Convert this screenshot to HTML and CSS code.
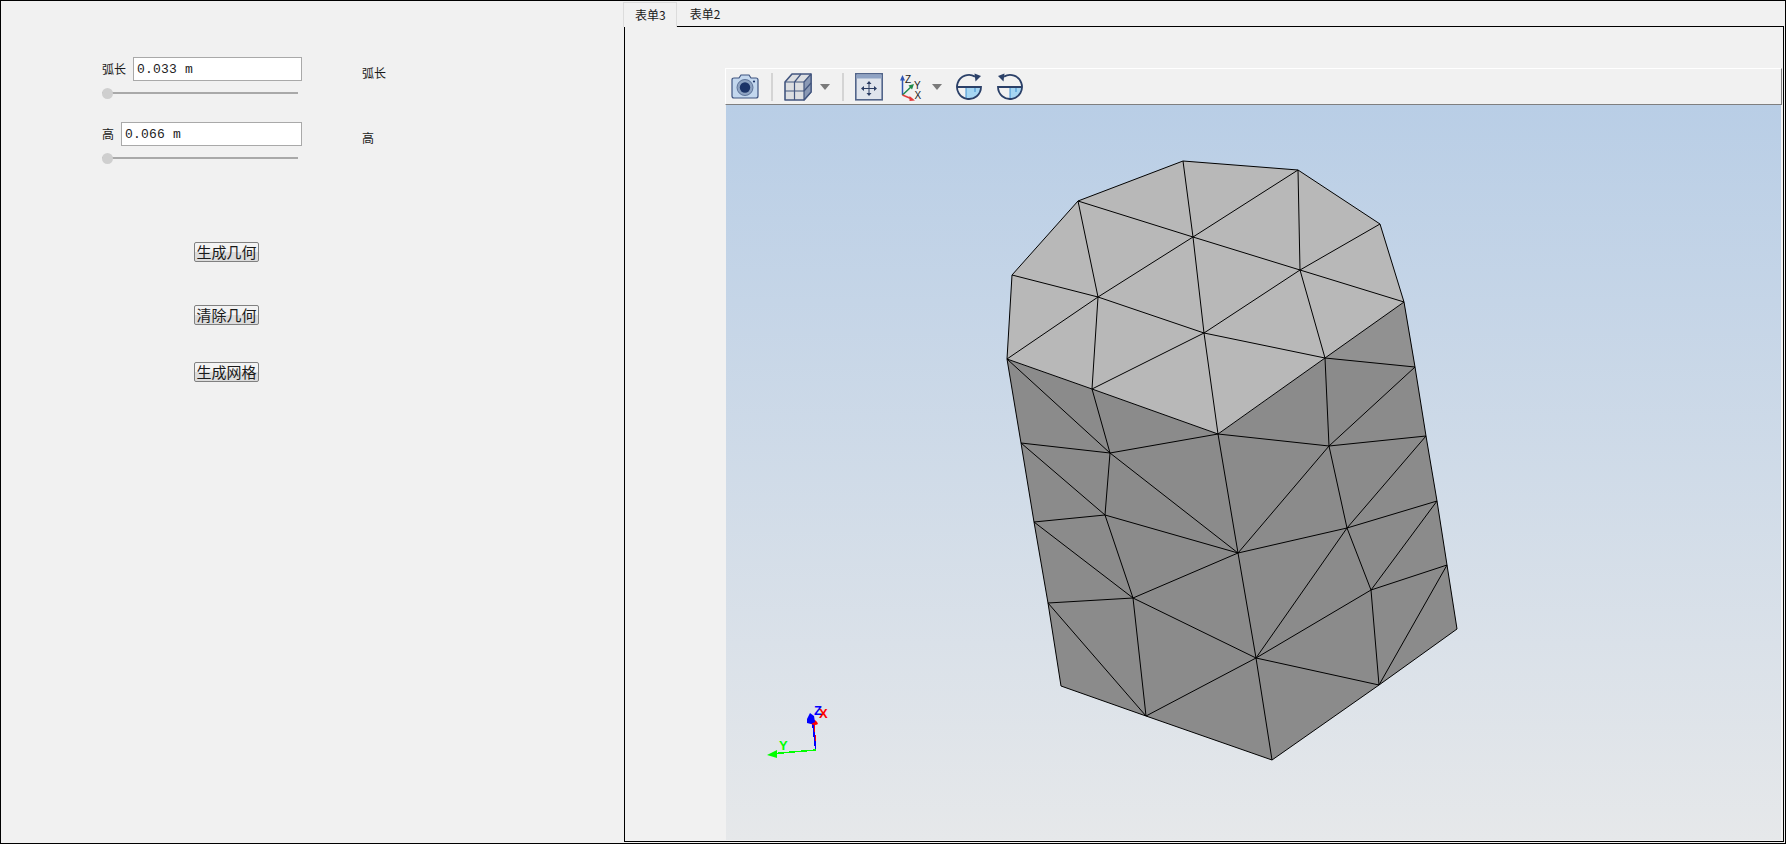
FILE: index.html
```html
<!DOCTYPE html>
<html lang="zh">
<head>
<meta charset="utf-8">
<title>几何网格</title>
<link rel="stylesheet" href="styles.css">
</head>
<body>
<div class="window">
  <section class="controls">
    <div class="param">
      <div class="field">
        <label class="field-label">弧长</label>
        <input class="field-input" type="text" value="0.033 m">
      </div>
      <span class="side-label">弧长</span>
      <div class="slider"><span class="slider-handle"></span></div>
    </div>
    <div class="param">
      <div class="field">
        <label class="field-label">高</label>
        <input class="field-input" type="text" value="0.066 m">
      </div>
      <span class="side-label">高</span>
      <div class="slider"><span class="slider-handle"></span></div>
    </div>
    <div class="actions">
      <button class="action action-first">生成几何</button>
      <button class="action action-second">清除几何</button>
      <button class="action action-third">生成网格</button>
    </div>
  </section>

  <section class="workspace">
    <div class="tabs">
      <div class="tab tab-active">表单3</div>
      <div class="tab">表单2</div>
    </div>
    <div class="pane">
      <div class="toolbar">
        <svg class="icon icon-camera" viewBox="0 0 28 28">
          <path d="M1 7Q1 5 3 5H8L10 2H18L20 5H25Q27 5 27 7V23Q27 25 25 25H3Q1 25 1 23Z" fill="#c3d7ee" stroke="#3e5480" stroke-width="1.2"/>
          <circle cx="14" cy="14.500" r="8" fill="#8ea3c2" stroke="#5d7399"/>
          <circle cx="14" cy="14.500" r="5.200" fill="#1c3468"/>
          <circle cx="23" cy="8.500" r="1.100" fill="#1c3468"/>
        </svg>
        <span class="separator"></span>
        <svg class="icon icon-cube" viewBox="0 0 28 28">
          <path d="M1 9L8 1H27V19L20 27H1Z" fill="#dcdee1" stroke="#43567f" stroke-width="1.600" stroke-linejoin="round"/>
          <path d="M20 9V27L27 19V1Z" fill="#8a99b5" stroke="#43567f" stroke-width="1.200" stroke-linejoin="round"/>
          <path d="M1 9H20M10.500 9V27M1 18H20M10.500 9L17 1M20 18L27 10" fill="none" stroke="#43567f" stroke-width="1.200"/>
        </svg>
        <span class="caret caret-cube"></span>
        <span class="separator"></span>
        <svg class="icon icon-fit" viewBox="0 0 28 28">
          <rect x="0.800" y="0.800" width="26.400" height="26" fill="#dfe4ec" stroke="#52658a" stroke-width="1.600"/>
          <rect x="1.500" y="1.500" width="25" height="4" fill="#8fa3c4"/>
          <path d="M14 10V21M8 15.500H20" stroke="#2a3c63" stroke-width="1" fill="none"/>
          <path d="M14 8L11.500 11H16.500ZM14 23L11.500 20H16.500ZM6 15.500L9 13V18ZM22 15.500L19 13V18Z" fill="#2a3c63"/>
        </svg>
        <svg class="icon icon-axes" viewBox="0 0 22 28">
          <path d="M2.500 5V22" stroke="#2f55b5" stroke-width="1.500" fill="none"/>
          <path d="M2.500 2L0 7.500H5Z" fill="#2f55b5"/>
          <path d="M2.500 22L12 13" stroke="#1f8a4a" stroke-width="1.500" fill="none"/>
          <path d="M14 11L8.500 12.500L12 16.500Z" fill="#1f8a4a"/>
          <path d="M2.500 22L12 26" stroke="#e23a3a" stroke-width="1.500" fill="none"/>
          <path d="M15 27.500L9.500 28V23Z" fill="#e23a3a"/>
          <text class="axis-tag" x="5" y="9.500">Z</text>
          <text class="axis-tag" x="14" y="16">Y</text>
          <text class="axis-tag" x="14.500" y="25.500">X</text>
        </svg>
        <span class="caret caret-axes"></span>
        <svg class="icon icon-rotate-cw" viewBox="0 0 28 28">
          <path d="M10 14H25A12 12 0 0 1 10 25.600Z" fill="#a6d6f2"/>
          <path d="M10 14V25M19 14V19" stroke="#3f8fd0" stroke-width="1" fill="none"/>
          <path d="M19 3.600A12 12 0 1 0 25 14H1" fill="none" stroke="#2b4068" stroke-width="1.800"/>
          <path d="M18.500 0.500L25 3L19.500 8.500Z" fill="#2b4068"/>
        </svg>
        <svg class="icon icon-rotate-ccw" viewBox="0 0 28 28">
          <path d="M13 14H25A12 12 0 0 1 13 26Z" fill="#a6d6f2"/>
          <path d="M13 14V26M19 14V19" stroke="#3f8fd0" stroke-width="1" fill="none"/>
          <path d="M7 3.600A12 12 0 1 1 1 14H25" fill="none" stroke="#2b4068" stroke-width="1.800"/>
          <path d="M7.500 0.500L1 3L6.500 8.500Z" fill="#2b4068"/>
        </svg>
      </div>
      <div class="viewport">
        <svg class="scene" viewBox="726 105 1055 735">
          <polygon class="face-side" points="1007,359 1092,389 1218,434 1325,358 1404,302 1415,367 1426,436 1437,501 1447,565 1457,629 1379,685 1272,760 1146,716 1061,686 1048,603 1034,522 1021,443"/>
          <polygon class="face-side-light" points="1325,358 1404,302 1415,367"/>
          <polygon class="face-top" points="1183,161 1298,170 1380,224 1404,302 1325,358 1218,434 1092,389 1007,359 1012,275 1078,201"/>
          <path class="mesh" d="M1183 161L1298 170L1380 224L1404 302L1325 358L1218 434L1092 389L1007 359L1012 275L1078 201Z
            M1078 201L1193 237L1300 270L1404 302 M1012 275L1098 297L1204 333L1325 358
            M1007 359L1098 297L1193 237L1298 170 M1092 389L1204 333L1300 270L1380 224
            M1078 201L1098 297L1092 389 M1183 161L1193 237L1204 333L1218 434 M1298 170L1300 270L1325 358
            M1404 302L1415 367L1426 436L1437 501L1447 565L1457 629L1379 685L1272 760L1146 716L1061 686L1048 603L1034 522L1021 443L1007 359
            M1325 358L1415 367 M1325 358L1329 446 M1415 367L1329 446 M1426 436L1329 446 M1218 434L1329 446
            M1218 434L1110 453 M1007 359L1110 453 M1092 389L1110 453 M1021 443L1110 453 M1021 443L1105 515 M1110 453L1105 515 M1034 522L1105 515
            M1110 453L1238 553 M1218 434L1238 553 M1105 515L1238 553 M1329 446L1238 553 M1329 446L1347 528 M1426 436L1347 528
            M1437 501L1347 528 M1238 553L1347 528 M1238 553L1133 598 M1105 515L1133 598 M1034 522L1133 598 M1048 603L1133 598
            M1048 603L1146 716 M1133 598L1146 716 M1133 598L1256 658 M1238 553L1256 658 M1347 528L1256 658 M1347 528L1371 590
            M1437 501L1371 590 M1447 565L1371 590 M1371 590L1256 658 M1256 658L1379 685 M1371 590L1379 685 M1447 565L1379 685
            M1256 658L1146 716 M1256 658L1272 760"/>
          <path class="axis-x" d="M815.700 750L814 722"/>
          <path class="axis-z" d="M815.700 750L812 716"/>
          <path class="axis-y" d="M815.700 750L775 753.500"/>
          <path class="head-y" d="M767 755L777 750L777 758Z"/>
          <path class="head-x" d="M811 722Q815 717 818 724Q815 726 811 724Z"/>
          <path class="head-z" d="M810 713L807 719L807 723L811 724L815 722L814 716Z"/>
          <text class="triad triad-y" x="779" y="750">Y</text>
          <text class="triad triad-z" x="814" y="715">Z</text>
          <text class="triad triad-x" x="819" y="718">X</text>
        </svg>
      </div>
    </div>
  </section>
</div>
</body>
</html>
```
FILE: styles.css
```css
* { box-sizing: border-box; }

html, body {
  margin: 0;
  padding: 0;
  overflow: hidden;
}

body {
  width: 1786px;
  height: 844px;
  background: #f1f1f1;
  color: #1a1a1a;
  font-family: "Noto Sans CJK SC", "Liberation Sans", sans-serif;
  font-size: 12px;
}

.window {
  display: grid;
  grid-template-columns: 622px 1fr;
  width: 1786px;
  height: 844px;
  border: 1px solid #000;
  background: #f1f1f1;
}

/* Left control column */
.controls {
  display: flex;
  flex-direction: column;
  padding: 56px 0 0 101px;
}

.param {
  display: grid;
  grid-template-columns: 200px auto;
  grid-template-rows: 24px 11px;
  column-gap: 60px;
  row-gap: 7px;
  margin-bottom: 23px;
}

.field {
  display: flex;
  align-items: center;
  gap: 7px;
}

.field-label {
  flex: none;
  font-size: 12px;
  line-height: 16px;
}

.field-input {
  flex: 1;
  min-width: 0;
  height: 24px;
  padding: 1px 0 0 3px;
  border: 1px solid #a9a9a9;
  box-shadow: inset 0 0 0 1px #fff;
  background: #fff;
  color: #222;
  font-family: "Liberation Mono", monospace;
  font-size: 13px;
  letter-spacing: 0.2px;
  outline: none;
}

.side-label {
  align-self: start;
  margin-top: 8px;
  font-size: 12px;
  line-height: 16px;
}

.slider {
  grid-column: 1;
  position: relative;
  width: 196px;
  height: 11px;
}

.slider::before {
  content: "";
  display: block;
  position: absolute;
  left: 0;
  right: 0;
  top: 4px;
  height: 2px;
  background: #a9a9a9;
}

.slider-handle {
  position: absolute;
  left: 0;
  top: 0;
  width: 11px;
  height: 11px;
  border-radius: 50%;
  background: #cfcfcf;
}

.actions {
  display: flex;
  flex-direction: column;
  align-items: flex-start;
  padding-left: 92px;
}

.action {
  width: 65px;
  height: 20px;
  padding: 0;
  border: 1px solid #808080;
  border-radius: 2px;
  background: linear-gradient(#f3f3f3 0 50%, #dcdcdc 50% 100%);
  color: #1a1a1a;
  font-family: "Noto Sans CJK SC", sans-serif;
  font-size: 15px;
  line-height: 18px;
}

.action-first { margin-top: 55px; }
.action-second { margin-top: 43px; }
.action-third { margin-top: 37px; }

/* Right workspace */
.workspace {
  display: flex;
  flex-direction: column;
  padding: 0 1px 1px 0;
  min-width: 0;
}

.tabs {
  display: flex;
  height: 25px;
  padding-top: 1px;
  position: relative;
  z-index: 1;
}

.tab {
  height: 24px;
  padding: 0 13px;
  font-size: 12px;
  line-height: 24px;
}

.tab-active {
  height: 25px;
  padding: 0 10px 0 11px;
  border: 1px solid #dcdcdc;
  border-bottom: 0;
  background: #f1f1f1;
}

.pane {
  flex: 1;
  display: flex;
  flex-direction: column;
  margin-left: 1px;
  padding: 41px 1px 1px 100px;
  border: 1px solid #000;
  min-height: 0;
}

.toolbar {
  flex: none;
  display: flex;
  align-items: center;
  height: 37px;
  padding-left: 5px;
  border-top: 1px solid #fff;
  border-left: 1px solid #fff;
  border-right: 1px solid #7f7f7f;
  border-bottom: 1px solid #7f7f7f;
  background: #f1f1f1;
}

.icon {
  flex: none;
  width: 28px;
  height: 28px;
  display: block;
}

.icon-axes { width: 22px; margin-left: 17px; }
.icon-rotate-cw { margin-left: 14px; }
.icon-rotate-ccw { margin-left: 13px; }

.axis-tag {
  font-family: "Liberation Sans", sans-serif;
  font-size: 10px;
  fill: #222;
}

.separator {
  flex: none;
  width: 2px;
  height: 28px;
  margin: 0 11px 0 12px;
  background: #d4d4d4;
}

.caret {
  flex: none;
  width: 0;
  height: 0;
  border-left: 5px solid transparent;
  border-right: 5px solid transparent;
  border-top: 6px solid #7a7a7a;
}

.caret-cube { margin-left: 8px; }
.caret-axes { margin-left: 10px; }

.viewport {
  flex: 1;
  margin: 0 1px;
  min-height: 0;
  background: linear-gradient(#b9cee6, #e6e8ea);
}

.scene {
  display: block;
  width: 100%;
  height: 100%;
}

.face-top { fill: #b8b8b8; }
.face-side { fill: #8b8b8b; }
.face-side-light { fill: #919191; }

.mesh {
  fill: none;
  stroke: #000;
  stroke-width: 1;
}

.axis-x, .axis-y, .axis-z {
  fill: none;
  stroke-width: 1.500;
  shape-rendering: crispEdges;
}

.axis-x { stroke: #f00; }
.axis-y { stroke: #0f0; }
.axis-z { stroke: #00f; }
.head-x { fill: #f00; }
.head-y { fill: #0f0; }
.head-z { fill: #00f; }

.triad {
  font-family: "Liberation Sans", sans-serif;
  font-size: 13px;
  font-weight: 700;
}

.triad-x { fill: #f00; }
.triad-y { fill: #0f0; }
.triad-z { fill: #00f; }
```
